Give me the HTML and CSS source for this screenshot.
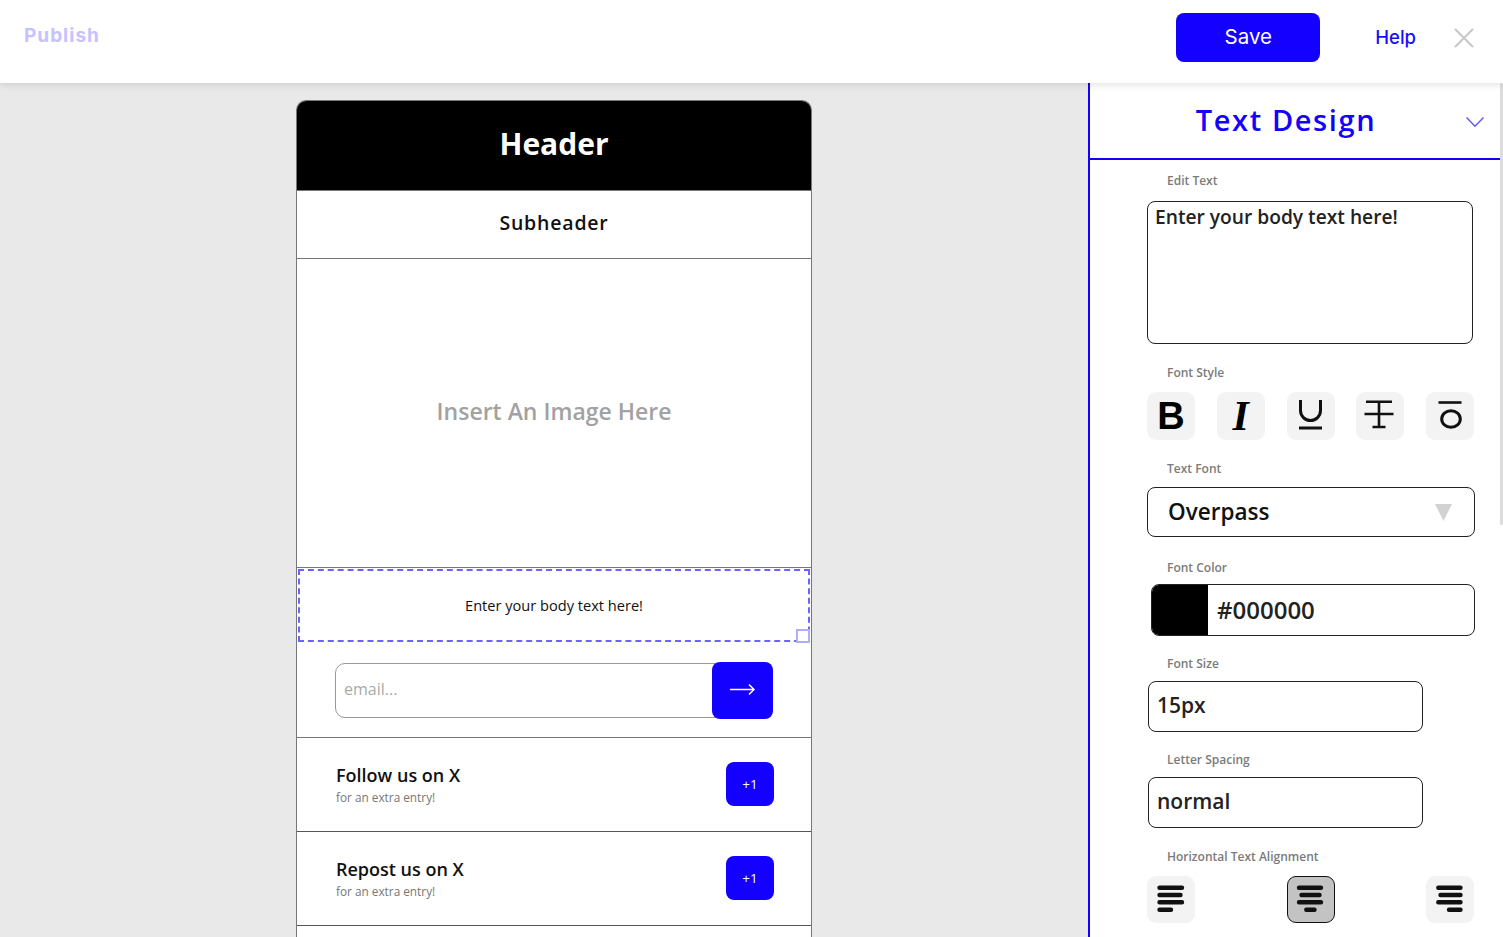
FILE: index.html
```html
<!DOCTYPE html>
<html lang="en">
<head>
<meta charset="utf-8">
<title>Text Design Editor</title>
<link rel="stylesheet" href="styles.css">
</head>
<body>
<header class="topbar">
  <div class="publish">Publish</div>
  <div class="spacer"></div>
  <div class="save">Save</div>
  <div class="help">Help</div>
  <svg class="close" width="20" height="20" viewBox="0 0 20 20"><path d="M1 1L19 19M19 1L1 19" stroke="#c8c8c8" stroke-width="2" fill="none"/></svg>
</header>
<div class="main">
  <section class="canvas">
    <div class="phone">
      <div class="ph-header">Header</div>
      <div class="ph-sub">Subheader</div>
      <div class="ph-image">Insert An Image Here</div>
      <div class="ph-body">
        <div class="body-box">Enter your body text here!<span class="handle"></span></div>
      </div>
      <div class="ph-email">
        <div class="email-field">
          <span class="placeholder">email...</span>
          <div class="email-btn">
            <svg width="61" height="57" viewBox="0 0 61 57"><path d="M18 27.5H42M37 22.5L42 27.5L37 32.5" stroke="#fff" stroke-width="1.5" fill="none"/></svg>
          </div>
        </div>
      </div>
      <div class="ph-row">
        <div class="row-text">
          <div class="row-title">Follow us on X</div>
          <div class="row-sub">for an extra entry!</div>
        </div>
        <div class="plus">+1</div>
      </div>
      <div class="ph-row">
        <div class="row-text">
          <div class="row-title">Repost us on X</div>
          <div class="row-sub">for an extra entry!</div>
        </div>
        <div class="plus">+1</div>
      </div>
      <div class="ph-row ph-row-empty"></div>
    </div>
  </section>
  <aside class="panel">
    <div class="panel-inner">
      <div class="panel-head">
        <h2 class="panel-title">Text Design</h2>
        <svg class="chev" width="18" height="10" viewBox="0 0 18 10"><path d="M0.5 0.5L9 9.2L17.5 0.5" stroke="#5b55ff" stroke-width="1.4" fill="none"/></svg>
      </div>
      <div class="panel-body">
        <div class="group g-edit">
          <div class="label">Edit Text</div>
          <div class="textarea">Enter your body text here!</div>
        </div>
        <div class="group g-style">
          <div class="label">Font Style</div>
          <div class="btn-row">
            <div class="ibtn"><span class="ic-b">B</span></div>
            <div class="ibtn"><span class="ic-i">I</span></div>
            <div class="ibtn"><svg width="48" height="48" viewBox="0 0 48 48"><path d="M13.5 8V18.5A10 10 0 0 0 33.5 18.5V8" stroke="#111" stroke-width="3" fill="none"/><path d="M12 36H35" stroke="#111" stroke-width="3"/></svg></div>
            <div class="ibtn"><svg width="48" height="48" viewBox="0 0 48 48"><path d="M10 9.8H36M23 9.8V35M8.5 22H37.5M16.5 35H29.5" stroke="#111" stroke-width="2.6" fill="none"/></svg></div>
            <div class="ibtn"><svg width="48" height="48" viewBox="0 0 48 48"><path d="M12.5 10.5H35.5" stroke="#111" stroke-width="2.6"/><ellipse cx="25" cy="27" rx="9.3" ry="8.2" stroke="#111" stroke-width="3" fill="none"/></svg></div>
          </div>
        </div>
        <div class="group g-font">
          <div class="label">Text Font</div>
          <div class="select">
            <span class="select-val">Overpass</span>
            <svg width="17" height="17" viewBox="0 0 17 17"><polygon points="0,0 17,0 8.5,17" fill="#d2d2d2"/></svg>
          </div>
        </div>
        <div class="group g-color">
          <div class="label">Font Color</div>
          <div class="color-input">
            <span class="swatch"></span>
            <span class="color-val">#000000</span>
          </div>
        </div>
        <div class="group g-size">
          <div class="label">Font Size</div>
          <div class="field">15px</div>
        </div>
        <div class="group g-spacing">
          <div class="label">Letter Spacing</div>
          <div class="field">normal</div>
        </div>
        <div class="group g-align">
          <div class="label">Horizontal Text Alignment</div>
          <div class="btn-row">
            <div class="ibtn"><svg width="48" height="48" viewBox="0 0 48 48"><path d="M12.5 11.7H35M12.5 19H33.5M12.5 26.3H35M12.5 33.7H24" stroke="#111" stroke-width="4.4" stroke-linecap="round" fill="none"/></svg></div>
            <div class="ibtn ibtn-active"><svg width="46" height="46" viewBox="1 1 46 46"><path d="M12 11.7H34M14.5 19H32.5M12 26.3H34M19.3 33.7H27.5" stroke="#111" stroke-width="4.4" stroke-linecap="round" fill="none"/></svg></div>
            <div class="ibtn"><svg width="48" height="48" viewBox="0 0 48 48"><path d="M12.3 11.7H34.5M14.5 19H34.5M12.3 26.3H34.5M23 33.7H34.5" stroke="#111" stroke-width="4.4" stroke-linecap="round" fill="none"/></svg></div>
          </div>
        </div>
      </div>
    </div>
    <div class="scrollbar"><div class="thumb"></div></div>
  </aside>
</div>
</body>
</html>
```

FILE: styles.css
```css
* { box-sizing: border-box; }
html, body { margin: 0; padding: 0; }
body {
  width: 1503px;
  height: 937px;
  overflow: hidden;
  display: flex;
  flex-direction: column;
  background: #e9e9e9;
  font-family: "Open Sans", "Noto Sans", sans-serif;
  color: #111;
}

/* ---------- top bar ---------- */
.topbar {
  flex: none;
  height: 83px;
  background: #fff;
  display: flex;
  align-items: flex-start;
  padding: 13px 29px 0 24px;
  box-shadow: 0 1px 8px rgba(0, 0, 0, 0.14);
  position: relative;
  z-index: 2;
  font-family: Inter, "Liberation Sans", sans-serif;
}
.publish {
  margin-top: 11px;
  font-size: 19px;
  line-height: 23px;
  font-weight: 700;
  letter-spacing: 1px;
  color: #c6c2ff;
}
.spacer { flex: 1; }
.save {
  width: 144px;
  height: 49px;
  border-radius: 8px;
  background: #1400ff;
  color: #fff;
  font-size: 20.5px;
  display: flex;
  align-items: center;
  justify-content: center;
  padding-bottom: 2px;
}
.help {
  margin-left: 55px;
  margin-top: 13px;
  font-size: 18.5px;
  line-height: 23px;
  font-weight: 500;
  color: #1a0dff;
}
.close { margin-left: 38px; margin-top: 15px; }

/* ---------- layout ---------- */
.main {
  flex: 1;
  min-height: 0;
  display: flex;
}
.canvas {
  flex: 1;
  min-width: 0;
  overflow: hidden;
  padding: 17px 0 0 296px;
}

/* ---------- phone preview ---------- */
.phone {
  width: 516px;
  background: #fff;
  border: 1px solid #777;
  border-bottom: none;
  border-radius: 10px 10px 0 0;
  overflow: hidden;
}
.ph-header {
  height: 90px;
  background: #000;
  border-bottom: 1px solid #777;
  color: #fff;
  font-size: 30px;
  font-weight: 700;
  display: flex;
  align-items: center;
  justify-content: center;
  padding-bottom: 5px;
}
.ph-sub {
  height: 68px;
  border-bottom: 1px solid #777;
  font-size: 19.5px;
  font-weight: 600;
  letter-spacing: 0.8px;
  display: flex;
  align-items: center;
  justify-content: center;
  padding-bottom: 5px;
}
.ph-image {
  height: 309px;
  border-bottom: 1px solid #777;
  font-size: 23px;
  font-weight: 600;
  color: #a2a2a2;
  display: flex;
  align-items: center;
  justify-content: center;
  padding-bottom: 5px;
}
.ph-body { padding: 1px 1px 0; }
.body-box {
  position: relative;
  height: 73px;
  border: 2px dashed #6c63ff;
  font-size: 14.6px;
  display: flex;
  align-items: center;
  justify-content: center;
  padding-bottom: 1px;
}
.handle {
  position: absolute;
  right: -2px;
  bottom: -3px;
  width: 14px;
  height: 14px;
  border: 2px solid #b2acff;
  background: #fff;
}
.ph-email {
  height: 96px;
  border-bottom: 1px solid #777;
  padding: 21px 38px 0 38px;
}
.email-field {
  position: relative;
  height: 55px;
  border: 1px solid #999;
  border-radius: 10px;
  display: flex;
  align-items: center;
  padding-left: 8px;
}
.placeholder { font-size: 16px; color: #aaa; padding-bottom: 3px; }
.email-btn {
  position: absolute;
  right: -1px;
  top: -2px;
  width: 61px;
  height: 57px;
  border-radius: 8px;
  background: #1400ff;
}
.email-btn svg { display: block; }
.ph-row {
  height: 94px;
  border-bottom: 1px solid #555;
  display: flex;
  align-items: center;
  justify-content: space-between;
  padding: 0 37px 0 39px;
}
.row-text { padding-bottom: 1px; }
.row-title { font-size: 18px; font-weight: 600; line-height: 22px; margin-bottom: 4px; }
.row-sub { font-size: 11.8px; color: #777; line-height: 15px; }
.plus {
  width: 48px;
  height: 44px;
  border-radius: 8px;
  background: #1400ff;
  color: #fff;
  font-size: 13.5px;
  display: flex;
  align-items: center;
  justify-content: center;
  margin-bottom: 2px;
}

/* ---------- side panel ---------- */
.panel {
  flex: none;
  width: 415px;
  display: flex;
  border-left: 2px solid #1400ff;
  background: #fff;
}
.panel-inner { flex: 1; min-width: 0; }
.panel-head {
  height: 77px;
  border-bottom: 2px solid #1400ff;
  display: flex;
  align-items: center;
  padding: 0 16px;
}
.panel-title {
  flex: 1;
  margin: 0;
  text-align: center;
  font-size: 29px;
  font-weight: 600;
  letter-spacing: 1.6px;
  color: #1400ff;
  padding-bottom: 2px;
}
.chev { margin-top: 3px; }
.panel-body { padding: 13px 26px 0 57px; }
.label {
  padding-left: 20px;
  margin-bottom: 11px;
  font-size: 12px;
  line-height: 16px;
  font-weight: 600;
  color: #7b7b7b;
}
.g-edit { margin-bottom: 21px; }
.g-edit .label { margin-bottom: 12px; }
.g-style { margin-bottom: 21px; }
.g-font { margin-bottom: 23px; }
.g-font .label { margin-bottom: 10px; }
.g-color { margin-bottom: 20px; }
.g-color .label { margin-bottom: 8px; }
.g-size { margin-bottom: 20px; }
.g-size .label { margin-bottom: 9px; }
.g-spacing { margin-bottom: 21px; }
.g-spacing .label { margin-bottom: 9px; }
.textarea {
  width: 326px;
  height: 143px;
  border: 1px solid #222;
  border-radius: 8px;
  padding: 1px 7px;
  font-size: 19.2px;
  font-weight: 600;
  line-height: 27px;
  color: #222;
}
.btn-row {
  display: flex;
  justify-content: space-between;
  width: 327px;
}
.ibtn {
  width: 48px;
  height: 48px;
  border-radius: 9px;
  background: #f3f3f3;
  display: flex;
  align-items: center;
  justify-content: center;
  color: #000;
}
.g-align .ibtn { height: 47px; }
.ibtn svg { display: block; }
.ibtn-active {
  background: #c3c3c3;
  border: 1px solid #111;
}
.ic-b {
  font-family: "Liberation Sans", Arial, sans-serif;
  font-weight: 700;
  font-size: 38px;
  line-height: 1;
}
.ic-i {
  font-family: "Liberation Serif", "Times New Roman", serif;
  font-weight: 700;
  font-style: italic;
  font-size: 42px;
  line-height: 1;
}
.select {
  width: 328px;
  height: 50px;
  border: 1px solid #222;
  border-radius: 8px;
  display: flex;
  align-items: center;
  justify-content: space-between;
  padding: 0 22px 0 20px;
}
.select-val { font-size: 22.5px; font-weight: 600; padding-bottom: 2px; }
.color-input {
  margin-left: 4px;
  width: 324px;
  height: 52px;
  border: 1px solid #222;
  border-radius: 8px;
  display: flex;
  align-items: center;
  overflow: hidden;
}
.swatch {
  align-self: stretch;
  width: 56px;
  background: #000;
}
.color-val { padding-left: 9px; font-size: 24px; font-weight: 600; color: #222; padding-bottom: 2px; }
.field {
  margin-left: 1px;
  width: 275px;
  height: 51px;
  border: 1px solid #222;
  border-radius: 8px;
  display: flex;
  align-items: center;
  padding: 0 0 3px 8px;
  font-size: 21px;
  font-weight: 600;
  color: #222;
}

/* ---------- scrollbar ---------- */
.scrollbar {
  flex: none;
  width: 3px;
  background: #fff;
}
.thumb {
  height: 442px;
  background: #dcdcdc;
  border-radius: 2px;
}
```
